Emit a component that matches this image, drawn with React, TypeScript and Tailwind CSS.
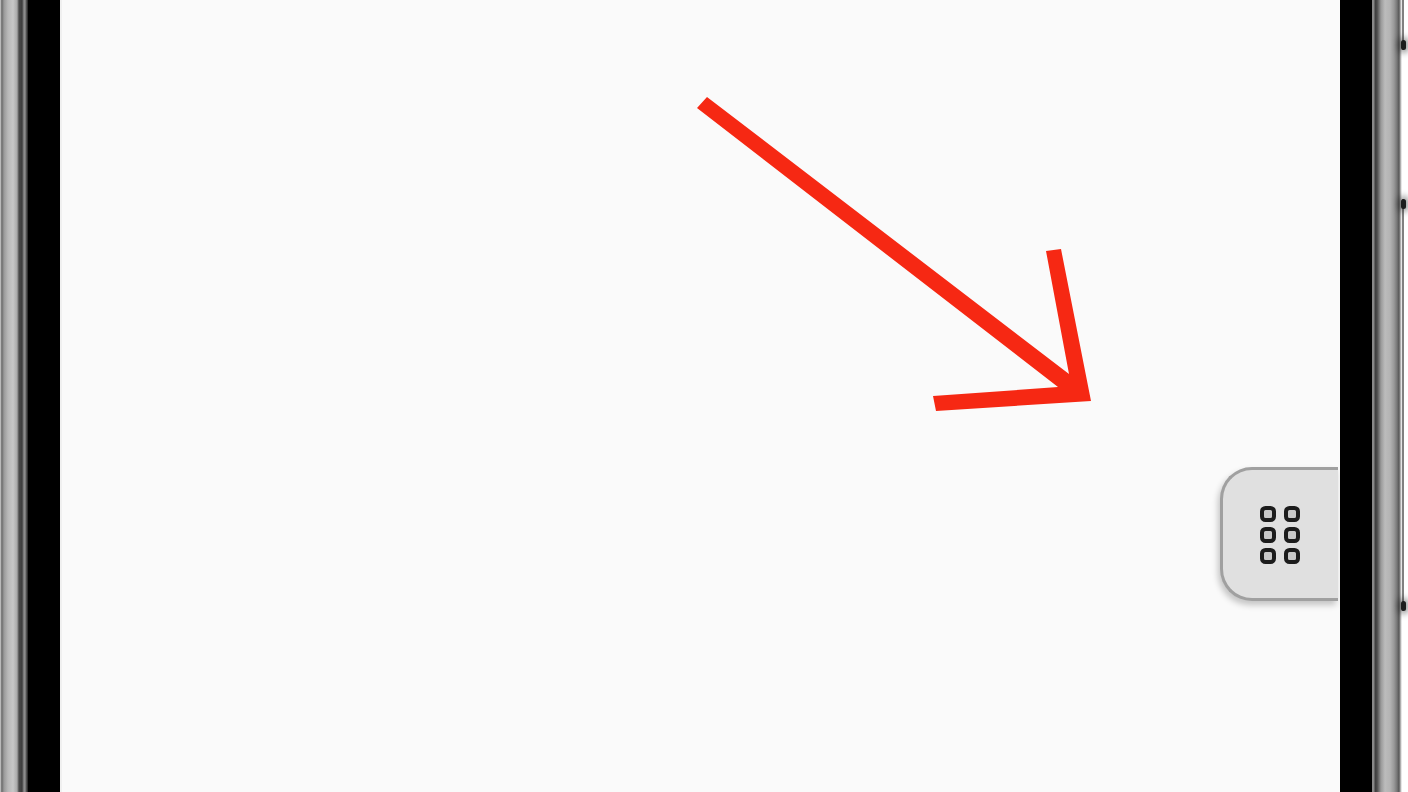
function Blob() {
  return <div className="-ml-[3px] h-[10px] w-[5px] rounded-full bg-[#1c1c1c] shadow-[0_0_6px_3px_rgba(0,0,0,0.4)]" />;
}

export default function App() {
  return (
    <div className="flex h-[792px] w-[1408px] overflow-hidden bg-white">
      <div className="h-full w-[28px] shrink-0 bg-[linear-gradient(90deg,#e8e8e8_0px,#8a8a8a_1px,#6e6e6e_2px,#9a9a9a_4px,#b8b8b8_8px,#c8c8c8_13px,#aaaaaa_17px,#4a4a4a_19px,#3c3c3c_22px,#8c8c8c_24px,#8c8c8c_25px,#3a3a3a_27px,#222222_28px)]" />
      <div className="h-full w-[32px] shrink-0 bg-black" />
      <div className="relative flex h-full w-[1280px] shrink-0 flex-col items-end border-l-2 border-[#f0f0f0] bg-[#fafafa] pr-[2px] pt-[467px]">
        <svg className="absolute left-[-2px] top-0" width="1280" height="792" viewBox="60 0 1280 792">
          <polygon
            points="707,97 1069,374 1046,251 1061,249 1091,401 936,411 933,396 1058,387 697,108"
            fill="#f62813"
          />
        </svg>
        <div className="relative flex h-[134px] w-[118px] items-center justify-center rounded-l-[32px] border-[3px] border-r-0 border-[#a0a0a0] bg-[#e0e0e0] pt-[4px] shadow-[-2px_4px_6px_rgba(0,0,0,0.22)]">
          <svg width="42" height="60" viewBox="0 0 42 60">
            {[2, 23, 44].map((y) =>
              [2, 26].map((x) => (
                <rect
                  key={`${x}-${y}`}
                  x={x}
                  y={y}
                  width="12"
                  height="12"
                  rx="3.5"
                  fill="#c8c8c8"
                  stroke="#1c1c1c"
                  strokeWidth="4"
                />
              )),
            )}
          </svg>
        </div>
      </div>
      <div className="h-full w-[32px] shrink-0 bg-black" />
      <div className="flex h-full w-[36px] shrink-0 flex-col items-end bg-[linear-gradient(90deg,#888888_0px,#888888_2px,#3c3c3c_3px,#4a4a4a_5px,#9a9a9a_9px,#bcbcbc_13px,#b4b4b4_18px,#999999_22px,#777777_25px,#555555_27px,#cccccc_29px,#ffffff_30px)]">
        <div className="flex h-[50px] w-[6px] flex-col justify-end border-l-2 border-[#808080] bg-white">
          <Blob />
        </div>
        <div className="mt-[149px] flex h-[412px] w-[6px] flex-col justify-between border-l-2 border-[#808080] bg-white">
          <Blob />
          <Blob />
        </div>
      </div>
    </div>
  );
}
